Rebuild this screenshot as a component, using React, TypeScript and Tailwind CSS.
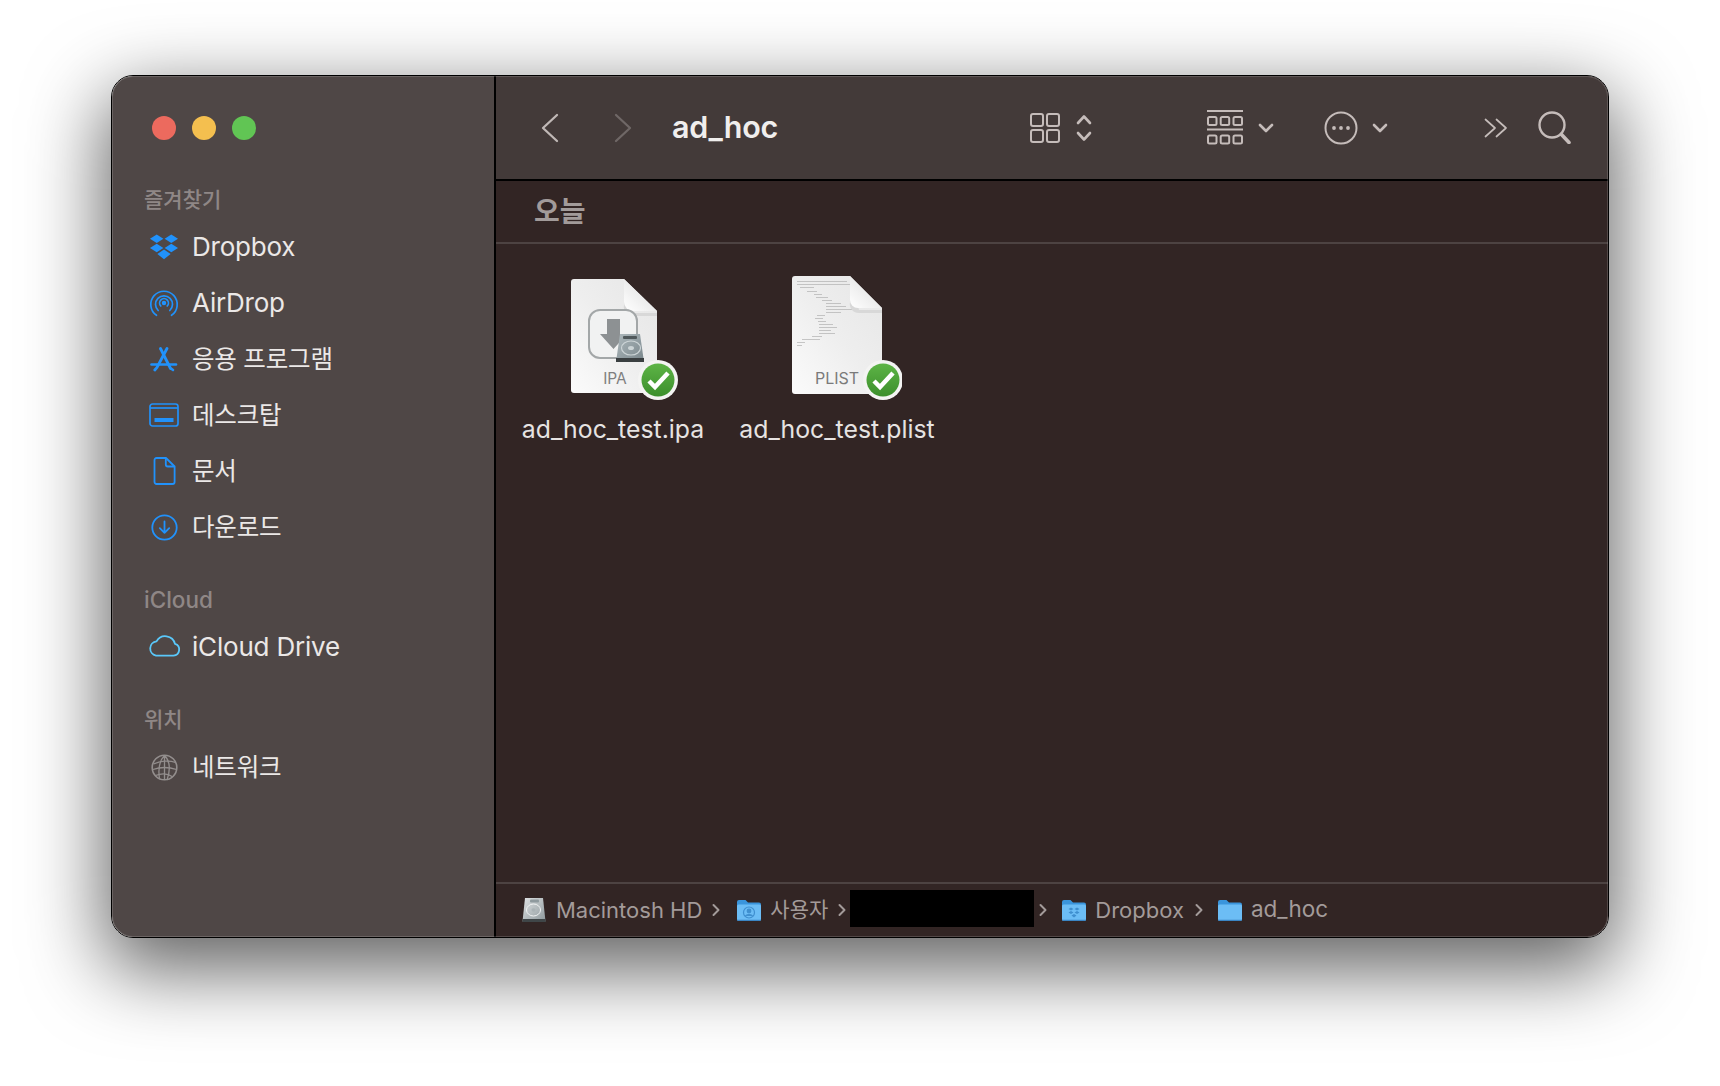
import React from "react";

const FONT = '"Inter","Noto Sans CJK KR",sans-serif';
const blue = "#2192fb";

function Row({ icon, label, latin }: { icon: React.ReactNode; label: string; latin?: boolean }) {
  return (
    <div className="flex h-[56px] items-center">
      <div className="flex w-[80px] shrink-0 justify-center pl-[24px]">{icon}</div>
      <span className={`text-[#ebe8e7] leading-none ${latin ? "text-[26px] tracking-[-0.2px]" : "text-[24.5px] tracking-[-0.2px]"}`}>{label}</span>
    </div>
  );
}

function SectionHead({ label, className }: { label: string; className: string }) {
  return <div className={`pl-[32px] font-medium leading-[26px] text-[#8f8786] ${className}`}>{label}</div>;
}

const DropboxIcon = () => (
  <svg width="30" height="26" viewBox="0 0 28 25" fill={blue}>
    <path d="M7 0.5 13.400 4.600 7 8.700 0.500 4.600Z" />
    <path d="M21 0.500 27.500 4.600 21 8.700 14.600 4.600Z" />
    <path d="M7 9.400 13.400 13.500 7 17.600 0.500 13.500Z" />
    <path d="M21 9.400 27.500 13.500 21 17.600 14.600 13.500Z" />
    <path d="M14 15 20.400 19.200 14 24.300 7.600 19.200Z" />
  </svg>
);
const AirDropIcon = () => (
  <svg width="30" height="28" viewBox="0 0 30 28" fill="none" stroke={blue} strokeWidth="1.700" strokeLinecap="round">
    <path d="M7.500 26.300A13.200 13.200 0 1 1 22.500 26.300" />
    <path d="M9.200 21.500A8.500 8.500 0 1 1 20.800 21.500" />
    <path d="M11.800 17A4.400 4.400 0 1 1 18.200 17" />
    <circle cx="15" cy="14" r="1.400" fill={blue} />
  </svg>
);
const AppsIcon = () => (
  <svg width="28" height="25" viewBox="0 0 28 25" fill="none" stroke={blue} strokeLinecap="round">
    <path d="M10.500 1.500 20.500 21.500" strokeWidth="2.800" />
    <path d="M17 1.500 7 20.500 4.800 23" strokeWidth="2.800" />
    <path d="M1.500 17.500H26" strokeWidth="2.600" />
    <path d="M21 21.500 23 23" strokeWidth="2.600" />
  </svg>
);
const DesktopIcon = () => (
  <svg width="30" height="24" viewBox="0 0 30 24" fill="none" stroke={blue} strokeWidth="1.700">
    <rect x="1" y="1" width="28" height="22" rx="2.500" />
    <path d="M1 5H29" />
    <rect x="5.500" y="15" width="19" height="4" fill={blue} stroke="none" />
  </svg>
);
const DocIcon = () => (
  <svg width="23" height="28" viewBox="0 0 23 28" fill="none" stroke={blue} strokeWidth="1.800" strokeLinejoin="round">
    <path d="M3.500 1H13L21.600 9.500V25A2 2 0 0 1 19.600 27H3.500A2 2 0 0 1 1.500 25V3A2 2 0 0 1 3.500 1Z" />
    <path d="M12.800 1.200V7.500A2 2 0 0 0 14.800 9.500H21.400" />
  </svg>
);
const DownloadIcon = () => (
  <svg width="27" height="27" viewBox="0 0 27 27" fill="none" stroke={blue} strokeWidth="1.800" strokeLinecap="round" strokeLinejoin="round">
    <circle cx="13.500" cy="13.500" r="12.200" />
    <path d="M13.500 7.500V18.800M8.800 14.200 13.500 18.900 18.200 14.200" />
  </svg>
);
const CloudIcon = () => (
  <svg width="33" height="24" viewBox="0 0 33 24" fill="none" stroke="#5ac8fa" strokeWidth="1.800" strokeLinejoin="round" className="-translate-y-[2px]">
    <path d="M8 22.600H25.500A6 6 0 0 0 27 10.900 10 10 0 0 0 8.500 8.400 7.200 7.200 0 0 0 8 22.600Z" />
  </svg>
);
const GlobeIcon = () => (
  <svg width="27" height="27" viewBox="0 0 27 27" fill="none" stroke="#938e8d" strokeWidth="1.300">
    <circle cx="13.500" cy="13.500" r="12.300" strokeWidth="1.600" />
    <path d="M2.500 10C9 7 18 6 24.500 8.500M2 15.500C9 13 18 13 25.500 15.500M4.500 21.500C11 19 17 19.500 22 23" />
    <path d="M13.500 1.500C9 6 7 15 8.500 25M13.500 1.500C18.500 6 20 15 16 26M13.500 1.500V26" />
  </svg>
);

const tool = "#c5bcba";

function Folder({ glyph }: { glyph?: "user" | "dropbox" }) {
  return (
    <svg width="26" height="24" viewBox="0 0 26 24" className="shrink-0">
      <path d="M1 4A2 2 0 0 1 3 2H9.500L12 4.500H23A2 2 0 0 1 25 6.500V21A2 2 0 0 1 23 23H3A2 2 0 0 1 1 21Z" fill="#3a95dc" />
      <path d="M1 8A1.500 1.500 0 0 1 2.500 6.500H23.500A1.500 1.500 0 0 1 25 8V21A2 2 0 0 1 23 23H3A2 2 0 0 1 1 21Z" fill="#6cbdf5" />
      <path d="M1 21.500A2 2 0 0 0 3 23H23A2 2 0 0 0 25 21.500V21.800H1Z" fill="#3a85c4" />
      {glyph === "user" && (
        <g fill="none" stroke="#3f8fcf" strokeWidth="1.200">
          <circle cx="13" cy="14.500" r="5.500" />
          <circle cx="13" cy="13" r="1.800" fill="#3f8fcf" />
          <path d="M9.500 18C10.500 16 15.500 16 16.500 18" fill="#3f8fcf" />
        </g>
      )}
      {glyph === "dropbox" && (
        <g fill="#3f8fcf">
          <path d="M10 9.500 12.500 11 10 12.500 7.500 11ZM16 9.500 18.500 11 16 12.500 13.500 11ZM10 13 12.500 14.500 10 16 7.500 14.500ZM16 13 18.500 14.500 16 16 13.500 14.500ZM13 16 15.500 17.500 13 19.500 10.500 17.500Z" />
        </g>
      )}
    </svg>
  );
}

function Crumb({ icon, label, className, textClass }: { icon: React.ReactNode; label: string; className: string; textClass?: string }) {
  return (
    <div className={`flex items-center ${className}`}>
      {icon}
      <span className={`leading-none text-[#a39b9a] ${textClass ?? "text-[22px]"}`}>{label}</span>
    </div>
  );
}

const Sep = ({ className }: { className: string }) => (
  <svg width="8" height="14" viewBox="0 0 8 14" fill="none" stroke="#a39b9a" strokeWidth="2" strokeLinecap="round" strokeLinejoin="round" className={`shrink-0 ${className}`}>
    <path d="M1.500 2 6.500 7 1.500 12" />
  </svg>
);

const HDIcon = () => (
  <svg width="26" height="26" viewBox="0 0 26 26" className="shrink-0">
    <defs>
      <linearGradient id="hdg" x1="0" y1="0" x2="1" y2="1">
        <stop offset="0" stopColor="#dfe3e4" />
        <stop offset="1" stopColor="#8d979b" />
      </linearGradient>
    </defs>
    <path d="M4 1H22L24.500 24.500H1.500Z" fill="url(#hdg)" />
    <ellipse cx="12.500" cy="13" rx="7" ry="6" fill="none" stroke="#f1f3f3" strokeWidth="1" />
    <ellipse cx="12.500" cy="13" rx="2" ry="1.700" fill="#aab2b5" />
    <rect x="9" y="2.500" width="9" height="3" rx="1" fill="#8f9a9e" />
    <rect x="1.500" y="22" width="23" height="3" fill="#3f4648" />
  </svg>
);

function Badge({ cx, cy }: { cx: number; cy: number }) {
  return (
    <g>
      <circle cx={cx} cy={cy} r="20" fill="#f4f4f3" />
      <circle cx={cx} cy={cy} r="16.500" fill="url(#badge)" />
      <path d={`M${cx - 9} ${cy + 1} L${cx - 3} ${cy + 7} L${cx + 10} ${cy - 7}`} fill="none" stroke="#fff" strokeWidth="4.500" strokeLinejoin="miter" />
    </g>
  );
}

const Defs = ({ id }: { id: string }) => (
  <defs>
    <linearGradient id="badge" x1="0" y1="0" x2="0" y2="1">
      <stop offset="0" stopColor="#5db446" />
      <stop offset="1" stopColor="#3c8f2c" />
    </linearGradient>
    <linearGradient id={`paper${id}`} x1="1" y1="0" x2="0" y2="1">
      <stop offset="0" stopColor="#e6e6e6" />
      <stop offset="0.5" stopColor="#eeeeee" />
      <stop offset="1" stopColor="#fbfbfb" />
    </linearGradient>
    <linearGradient id={`fold${id}`} x1="0" y1="1" x2="1" y2="0">
      <stop offset="0" stopColor="#ffffff" />
      <stop offset="1" stopColor="#d9d9d9" />
    </linearGradient>
    <linearGradient id={`disk${id}`} x1="0" y1="0" x2="1" y2="1">
      <stop offset="0" stopColor="#aeb9bd" />
      <stop offset="1" stopColor="#78858a" />
    </linearGradient>
  </defs>
);

function IpaIcon() {
  return (
    <svg width="110" height="125" viewBox="0 0 110 125" className="ml-[26px] shrink-0">
      <Defs id="a" />
      <path d="M3 0H53L86 32V111A3 3 0 0 1 83 114H3A3 3 0 0 1 0 111V3A3 3 0 0 1 3 0Z" fill="url(#papera)" />
      <path d="M53 2V26A9 9 0 0 0 62 37H86V34H62Z" fill="#d8d8d8" />
      <path d="M53 0V23A9 9 0 0 0 62 32H86L53 0Z" fill="url(#folda)" />
      <rect x="18" y="31" width="48" height="48" rx="11" fill="#f1f2f2" stroke="#a3a7a8" strokeWidth="2" />
      <path d="M36 40H49V55H56L42.500 70 29 55H36Z" fill="#8d9193" />
      <path d="M49 55H69L73 83H45Z" fill="url(#diska)" />
      <ellipse cx="60" cy="69" rx="9.500" ry="7" fill="none" stroke="#ccd4d6" strokeWidth="1.200" />
      <ellipse cx="60" cy="69" rx="3" ry="2" fill="#ccd4d6" />
      <rect x="52" y="57" width="14" height="3" rx="1" fill="#4f585b" />
      <rect x="45" y="79" width="28" height="4" fill="#3a3f41" />
      <text x="44" y="105" textAnchor="middle" fontSize="15.500" fill="#7f7f7f" fontFamily="Inter, sans-serif">IPA</text>
      <Badge cx={87} cy={101} />
    </svg>
  );
}

function PlistIcon() {
  const lines: [number, number, number][] = [
    [5, 5, 50], [5, 8, 60], [8, 11, 14], [15, 15, 10], [22, 18, 8], [24, 21, 12], [30, 24, 10], [34, 27, 15], [34, 30, 20], [34, 33, 27], [34, 36, 15],
    [25, 39, 8], [23, 42, 8], [26, 45, 8], [27, 48, 14], [27, 51, 18], [27, 54, 12], [27, 57, 16], [20, 60, 10], [10, 63, 18], [5, 66, 8], [5, 69, 5],
  ];
  return (
    <svg width="110" height="128" viewBox="0 0 110 128" className="ml-[20px] shrink-0">
      <Defs id="b" />
      <path d="M3 0H58L90 32V115A3 3 0 0 1 87 118H3A3 3 0 0 1 0 115V3A3 3 0 0 1 3 0Z" fill="url(#paperb)" />
      <g fill="#b0b0b0">
        {lines.map(([x, y, w], i) => (
          <rect key={i} x={x} y={y} width={w} height="0.700" />
        ))}
      </g>
      <path d="M58 2V26A9 9 0 0 0 67 37H90V34H67Z" fill="#d8d8d8" />
      <path d="M58 0V24A8 8 0 0 0 66 32H90L58 0Z" fill="url(#foldb)" />
      <text x="45" y="108" textAnchor="middle" fontSize="16" fill="#7a7a7a" fontFamily="Inter, sans-serif">PLIST</text>
      <Badge cx={91} cy={104} />
    </svg>
  );
}

export default function App() {
  return (
    <div className="h-[1086px] w-[1720px] overflow-hidden bg-white pl-[111px] pt-[75px]" style={{ fontFamily: FONT }}>
      <div className="relative flex h-[863px] w-[1498px] overflow-hidden rounded-[22px] border border-black shadow-[0_26px_78px_6px_rgba(0,0,0,0.62)]">
        {/* Sidebar */}
        <aside className="flex h-full w-[384px] shrink-0 flex-col border-r-2 border-black bg-[#4f4746]">
          <div className="ml-[40px] mt-[40px] flex gap-[16px]">
            <span className="h-[24px] w-[24px] rounded-full bg-[#ec6a5e]" />
            <span className="h-[24px] w-[24px] rounded-full bg-[#f4bf4f]" />
            <span className="h-[24px] w-[24px] rounded-full bg-[#61c554]" />
          </div>
          <SectionHead label="즐겨찾기" className="mt-[47px] text-[21px]" />
          <div className="mt-[6px]">
            <Row icon={<DropboxIcon />} label="Dropbox" latin />
            <Row icon={<AirDropIcon />} label="AirDrop" latin />
            <Row icon={<AppsIcon />} label="응용 프로그램" />
            <Row icon={<DesktopIcon />} label="데스크탑" />
            <Row icon={<DocIcon />} label="문서" />
            <Row icon={<DownloadIcon />} label="다운로드" />
          </div>
          <SectionHead label="iCloud" className="mt-[32px] text-[22.5px]" />
          <div className="mt-[6px]">
            <Row icon={<CloudIcon />} label="iCloud Drive" latin />
          </div>
          <SectionHead label="위치" className="mt-[32px] text-[21px]" />
          <div className="mt-[6px]">
            <Row icon={<GlobeIcon />} label="네트워크" />
          </div>
        </aside>

        {/* Main */}
        <main className="flex min-w-0 flex-1 flex-col bg-[#322524]">
          <header className="flex h-[105px] shrink-0 items-center border-b-2 border-black bg-[#433a39]">
            <svg width="18" height="30" viewBox="0 0 18 30" fill="none" stroke="#c0b8b6" strokeWidth="2.300" strokeLinecap="round" strokeLinejoin="round" className="ml-[45px] shrink-0">
              <path d="M16 2 2 15 16 28" />
            </svg>
            <svg width="18" height="30" viewBox="0 0 18 30" fill="none" stroke="#6f6766" strokeWidth="2.300" strokeLinecap="round" strokeLinejoin="round" className="ml-[55px] shrink-0">
              <path d="M2 2 16 15 2 28" />
            </svg>
            <h1 className="ml-[40px] text-[30.500px] font-semibold leading-none tracking-[-0.2px] text-[#f0eeed]">ad_hoc</h1>
            <svg width="30" height="30" viewBox="0 0 30 30" fill="none" stroke={tool} strokeWidth="2" className="ml-[252px] shrink-0">
              <rect x="1" y="1" width="12" height="12" rx="2" />
              <rect x="17" y="1" width="12" height="12" rx="2" />
              <rect x="1" y="17" width="12" height="12" rx="2" />
              <rect x="17" y="17" width="12" height="12" rx="2" />
            </svg>
            <svg width="16" height="28" viewBox="0 0 16 28" fill="none" stroke={tool} strokeWidth="2.600" strokeLinecap="round" strokeLinejoin="round" className="ml-[16px] shrink-0">
              <path d="M2 9 8 2.500 14 9M2 19 8 25.500 14 19" />
            </svg>
            <svg width="36" height="35" viewBox="0 0 36 35" fill="none" stroke={tool} strokeWidth="2" className="ml-[115px] shrink-0">
              <path d="M0 1H36M0 19.500H36" strokeWidth="2.200" />
              <rect x="1" y="7" width="8.500" height="8" rx="1.500" />
              <rect x="13.700" y="7" width="8.500" height="8" rx="1.500" />
              <rect x="26.500" y="7" width="8.500" height="8" rx="1.500" />
              <rect x="1" y="25.500" width="8.500" height="8" rx="1.500" />
              <rect x="13.700" y="25.500" width="8.500" height="8" rx="1.500" />
              <rect x="26.500" y="25.500" width="8.500" height="8" rx="1.500" />
            </svg>
            <svg width="16" height="10" viewBox="0 0 16 10" fill="none" stroke={tool} strokeWidth="2.600" strokeLinecap="round" strokeLinejoin="round" className="ml-[15px] shrink-0">
              <path d="M2 2 8 8 14 2" />
            </svg>
            <svg width="34" height="34" viewBox="0 0 34 34" fill="none" stroke={tool} strokeWidth="2" className="ml-[50px] shrink-0">
              <circle cx="17" cy="17" r="15.500" />
              <g fill={tool} stroke="none">
                <circle cx="10" cy="17" r="1.900" />
                <circle cx="17" cy="17" r="1.900" />
                <circle cx="24" cy="17" r="1.900" />
              </g>
            </svg>
            <svg width="16" height="10" viewBox="0 0 16 10" fill="none" stroke={tool} strokeWidth="2.600" strokeLinecap="round" strokeLinejoin="round" className="ml-[14px] shrink-0">
              <path d="M2 2 8 8 14 2" />
            </svg>
            <svg width="24" height="20" viewBox="0 0 24 20" fill="none" stroke={tool} strokeWidth="1.700" strokeLinecap="round" strokeLinejoin="round" className="ml-[96px] shrink-0">
              <path d="M1.500 1.500 11 10 1.500 18.500M12.500 1.500 22 10 12.500 18.500" />
            </svg>
            <svg width="33" height="33" viewBox="0 0 33 33" fill="none" stroke={tool} strokeWidth="2.400" strokeLinecap="round" className="ml-[30px] shrink-0">
              <circle cx="14" cy="14" r="12.500" />
              <path d="M23.500 23.500 31 31.500" strokeWidth="3.600" />
            </svg>
          </header>

          <div className="flex h-[63px] shrink-0 items-center border-b-2 border-[#4d4342] pl-[38px]">
            <span className="text-[28px] font-semibold leading-none text-[#a29b9a]">오늘</span>
          </div>

          <section className="flex flex-1 items-start">
            <div className="ml-[22px] mt-[35px] flex w-[190px] shrink-0 flex-col items-center">
              <IpaIcon />
              <span className="mt-[13px] whitespace-nowrap text-[24.800px] leading-[25px] text-[#e6e3e2]">ad_hoc_test.ipa</span>
            </div>
            <div className="ml-[29px] mt-[32px] flex w-[200px] shrink-0 flex-col items-center">
              <PlistIcon />
              <span className="mt-[13px] whitespace-nowrap text-[24.800px] leading-[25px] text-[#e6e3e2]">ad_hoc_test.plist</span>
            </div>
          </section>

          <footer className="flex h-[55px] shrink-0 items-center border-t-2 border-[#4d4342] pb-[2px] pl-[25px]">
            <Crumb icon={<HDIcon />} label="Macintosh HD" className="gap-[9px]" />
            <Sep className="ml-[10px]" />
            <Crumb icon={<Folder glyph="user" />} label="사용자" className="ml-[16px] gap-[8px]" textClass="text-[21px]" />
            <Sep className="ml-[10px]" />
            <div className="-mt-[2px] ml-[4px] h-[37px] w-[184px] shrink-0 bg-black" />
            <Sep className="ml-[5px]" />
            <Crumb icon={<Folder glyph="dropbox" />} label="Dropbox" className="ml-[14px] gap-[8px]" />
            <Sep className="ml-[11px]" />
            <Crumb icon={<Folder />} label="ad_hoc" className="ml-[14px] gap-[8px]" textClass="text-[22.500px]" />
          </footer>
        </main>
        <div className="pointer-events-none absolute inset-0 rounded-[21px] shadow-[inset_0_0_0_1px_rgba(255,255,255,0.16)]" />
      </div>
    </div>
  );
}
